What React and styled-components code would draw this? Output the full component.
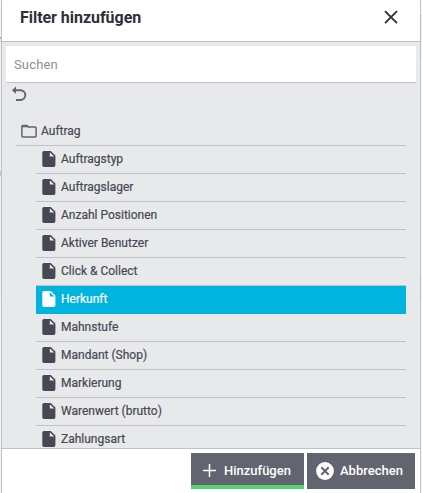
import React from "react";
import styled, { createGlobalStyle } from "styled-components";

const GlobalStyle = createGlobalStyle`
  * { box-sizing: border-box; }
  body {
    margin: 0;
    overflow: hidden;
    background: #eeeff0;
    font-family: Roboto, "Liberation Sans", sans-serif;
    color: #464855;
  }
`;

const Backdrop = styled.div`
  display: flex;
  width: 422px;
  height: 493px;
  padding: 0 1px;
  background:
    linear-gradient(#f7f7f8 0 15px, #e2e3e5 15px 16px, #f5f5f6 16px 37px, #a9abb0 37px 39px, #eeeff0 39px 41px, #c4c5c8 41px 42px, #eeeff0 42px 171px, #c4c5c8 171px 176px, #eeeff0 176px 300px, #f5f5f6 300px) left / 1px 100% no-repeat,
    linear-gradient(#f7f7f8 0 15px, #e2e3e5 15px 16px, #eeeff0 16px 58px, #f5f5f6 58px 277px, #eeeff0 277px 300px, #f5f5f6 300px);
`;

const Dialog = styled.section`
  display: flex;
  flex-direction: column;
  width: 420px;
  height: 493px;
  background: #fff;
  border: solid #c1c2c6;
  border-width: 0 1px;
`;

const Header = styled.header`
  display: flex;
  flex: none;
  justify-content: space-between;
  height: 42px;
  padding: 7px 22px 0 18px;
  border-bottom: 1px solid #c1c2c6;
  color: #2d303b;
`;

const Title = styled.h1`
  margin: 0;
  font-size: 16px;
  font-weight: 700;
  line-height: 21px;
  letter-spacing: -0.04px;
`;

const CloseButton = styled.button`
  display: flex;
  width: 14px;
  height: 14px;
  margin-top: 3px;
  padding: 0;
  border: 0;
  background: none;
  color: inherit;
`;

const Body = styled.div`
  display: flex;
  flex-direction: column;
  flex: none;
  height: 407px;
  padding: 4px 4px 0;
  overflow: hidden;
  background: #e8e9eb;
  border-bottom: 1px solid #c1c2c6;
`;

const SearchInput = styled.input`
  flex: none;
  width: 410px;
  height: 37px;
  padding: 0 8px;
  border: 0;
  border-bottom: 1px solid #c1c2c6;
  border-radius: 0;
  outline: 0;
  background: #fff;
  font: 13px Roboto, "Liberation Sans", sans-serif;
  letter-spacing: 0.15px;
  &::placeholder { color: #8d8e94; opacity: 1; }
`;

const UndoButton = styled.button`
  display: flex;
  flex: none;
  width: 16px;
  height: 16px;
  margin: 3px 0 16px 5px;
  padding: 0;
  border: 0;
  background: none;
  color: #62646f;
`;

const Folder = styled.div`
  display: flex;
  flex: none;
  align-items: center;
  gap: 4px;
  width: 390px;
  height: 28px;
  margin-left: 10px;
  padding: 0 0 2px 5px;
  border-bottom: 1px solid #c1c2c6;
  font-size: 12px;
`;

const List = styled.ul`
  width: 370px;
  margin: 0 0 0 30px;
  padding: 0;
  list-style: none;
`;

const Item = styled.li`
  display: flex;
  align-items: center;
  gap: 5px;
  height: 28px;
  padding: 0 0 2px 6px;
  border-bottom: 1px solid ${(p) => (p.$selected ? "#00b4de" : "#c1c2c6")};
  background: ${(p) => (p.$selected ? "#00b4de" : "transparent")};
  color: ${(p) => (p.$selected ? "#fff" : "#464855")};
  font-size: 12px;
`;

const Label = styled.span`
  line-height: 16px;
  -webkit-text-stroke: 0.2px;
`;

const Footer = styled.footer`
  display: flex;
  justify-content: flex-end;
  gap: 3px;
  padding: 4px 5px 0 0;
`;

const Action = styled.button`
  display: flex;
  align-items: center;
  gap: ${(p) => (p.$primary ? "8px" : "6px")};
  width: ${(p) => (p.$primary ? "113px" : "108px")};
  height: 36px;
  padding: 0 0 1px ${(p) => (p.$primary ? "12px" : "9px")};
  border: 0;
  background: #62646f;
  box-shadow: ${(p) => (p.$primary ? "inset 0 -4px #54d471" : "none")};
  color: #fff;
  font: 500 13px/16px Roboto, "Liberation Sans", sans-serif;
`;

const Glyph = styled.svg`
  display: block;
  flex: none;
  position: static;
`;

const FileIcon = ({ selected }) => (
  <Glyph width="14" height="16" viewBox="0 0 14 16">
    <path fill="currentColor" d="M2 0H8.8L13.4 4.6V14.3a1.7 1.7 0 0 1-1.7 1.7H2A1.7 1.7 0 0 1 .3 14.3V1.7A1.7 1.7 0 0 1 2 0Z" />
    <path fill={selected ? "#00b4de" : "#e8e9eb"} d="M7.8 1.2V5.6H12.3Z" />
  </Glyph>
);

const items = [
  "Auftragstyp", "Auftragslager", "Anzahl Positionen", "Aktiver Benutzer",
  "Click & Collect", "Herkunft", "Mahnstufe", "Mandant (Shop)",
  "Markierung", "Warenwert (brutto)", "Zahlungsart",
];

export default function App() {
  return (
    <>
      <GlobalStyle />
      <Backdrop>
        <Dialog>
          <Header>
            <Title>Filter hinzufügen</Title>
            <CloseButton aria-label="Schließen">
              <Glyph width="14" height="14" viewBox="0 0 14 14">
                <path d="M1 1.2 13 13.2M13 1.2 1 13.2" stroke="currentColor" strokeWidth="1.9" />
              </Glyph>
            </CloseButton>
          </Header>
          <Body>
            <SearchInput placeholder="Suchen" />
            <UndoButton aria-label="Zurück">
              <Glyph width="16" height="16" viewBox="0 0 16 16">
                <path d="M4 4.2H9.4a4.9 4.9 0 0 1 0 9.8H5" fill="none" stroke="currentColor" strokeWidth="1.9" />
                <path d="M.9 4.2 5 .6V7.8Z" fill="currentColor" />
              </Glyph>
            </UndoButton>
            <Folder>
              <Glyph width="16" height="14" viewBox="0 0 16 14">
                <path d="M.9 2.4V12a.9.9 0 0 0 .9.9H14.2a.9.9 0 0 0 .9-.9V4a.9.9 0 0 0-.9-.9H7.4L6 1.6H1.8a.9.9 0 0 0-.9.8Z" fill="none" stroke="#62646f" strokeWidth="1.5" />
                <path d="M1 1H6.3L8 3.2H1Z" fill="#62646f" />
              </Glyph>
              <Label>Auftrag</Label>
            </Folder>
            <List>
              {items.map((name) => {
                const selected = name === "Herkunft";
                return (
                  <Item key={name} $selected={selected}>
                    <FileIcon selected={selected} />
                    <Label>{name}</Label>
                  </Item>
                );
              })}
            </List>
          </Body>
          <Footer>
            <Action $primary>
              <Glyph width="13" height="13" viewBox="0 0 13 13">
                <path d="M6.5 0V13M0 6.5H13" stroke="currentColor" strokeWidth="1.5" />
              </Glyph>
              <span>Hinzufügen</span>
            </Action>
            <Action>
              <Glyph width="18" height="18" viewBox="0 0 18 18">
                <circle cx="9" cy="9" r="8.9" fill="currentColor" />
                <path d="m5.3 5.3 7.4 7.4M12.7 5.3 5.3 12.7" stroke="#62646f" strokeWidth="2" />
              </Glyph>
              <span>Abbrechen</span>
            </Action>
          </Footer>
        </Dialog>
      </Backdrop>
    </>
  );
}
